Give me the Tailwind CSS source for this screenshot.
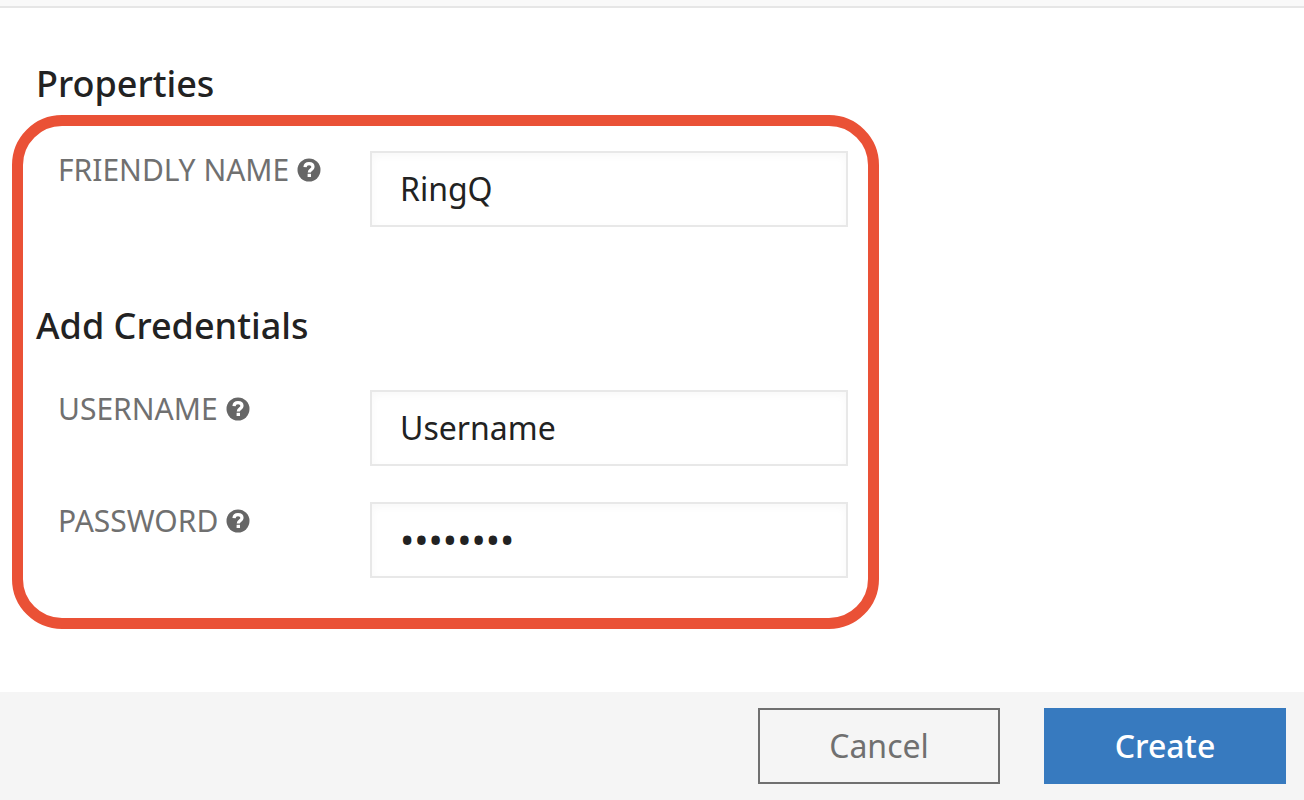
<!DOCTYPE html>
<html lang="en">
<head>
  <meta charset="UTF-8" />
  <meta name="viewport" content="width=device-width, initial-scale=1.0" />
  <title>Add Credentials</title>
  <script src="https://cdn.jsdelivr.net/npm/@tailwindcss/browser@4"></script>
</head>
<body class="bg-white min-h-screen flex flex-col font-['Noto_Sans','Open_Sans',sans-serif] text-[#222]">

  <svg class="hidden">
    <symbol id="help" viewBox="0 0 24 24">
      <circle cx="12" cy="12" r="11.5" fill="#666" />
      <path d="M8 9.2C8.2 6.6 9.8 5.7 12 5.7C14.3 5.7 16 6.9 16 9C16 11.8 12.3 11.4 12.3 14.4" fill="none" stroke="#fff" stroke-width="3.2" />
      <rect x="10.6" y="15.8" width="3.4" height="3.2" fill="#fff" />
    </symbol>
  </svg>

  <header class="h-2 bg-[#f9f9f9] border-b-2 border-[#e6e6e6]"></header>

  <main class="flex-1 pt-14 px-3 pb-[62px]">
    <h2 class="pl-6 text-[36px] leading-10 font-medium">Properties</h2>

    <form id="credentials" class="mt-[11px] max-w-[867px] border-[11px] border-[#ea5136] rounded-[50px] pt-[25px] pr-5 pb-10 pl-[13px]">
      <div class="flex items-start">
        <label for="friendly-name" class="w-[334px] shrink-0 pl-[22px] flex items-center gap-2 text-[30px] leading-[38px] text-[#707070]">
          FRIENDLY NAME
          <svg class="size-6"><use href="#help" /></svg>
        </label>
        <input id="friendly-name" type="text" value="RingQ"
          class="flex-1 min-w-0 h-19 px-7 pb-0.5 border-2 border-[#e8e8e8] text-[32px] inset-shadow-[0_3px_8px_#00000008] outline-none" />
      </div>

      <h2 class="mt-[79px] text-[36px] leading-10 font-medium">Add Credentials</h2>

      <div class="mt-11 flex flex-col gap-9">
        <div class="flex items-start">
          <label for="username" class="w-[334px] shrink-0 pl-[22px] flex items-center gap-2 text-[30px] leading-[38px] text-[#707070]">
            USERNAME
            <svg class="size-6"><use href="#help" /></svg>
          </label>
          <input id="username" type="text" value="Username"
            class="flex-1 min-w-0 h-19 px-7 pb-0.5 border-2 border-[#e8e8e8] text-[32px] inset-shadow-[0_3px_8px_#00000008] outline-none" />
        </div>
        <div class="flex items-start">
          <label for="password" class="w-[334px] shrink-0 pl-[22px] flex items-center gap-2 text-[30px] leading-[38px] text-[#707070]">
            PASSWORD
            <svg class="size-6"><use href="#help" /></svg>
          </label>
          <input id="password" type="password" value="password"
            class="flex-1 min-w-0 h-19 px-7 pb-0.5 border-2 border-[#e8e8e8] text-[38px] inset-shadow-[0_3px_8px_#00000008] outline-none" />
        </div>
      </div>
    </form>
  </main>

  <footer class="bg-[#f5f5f5] flex justify-end gap-11 py-4 pr-[18px] pl-4">
    <button type="button" class="w-[242px] h-19 border-2 border-[#707070] text-[32px] text-[#707070]">Cancel</button>
    <button type="submit" form="credentials" class="w-[242px] h-19 bg-[#377abf] text-[32px] font-medium text-white">Create</button>
  </footer>

</body>
</html>
